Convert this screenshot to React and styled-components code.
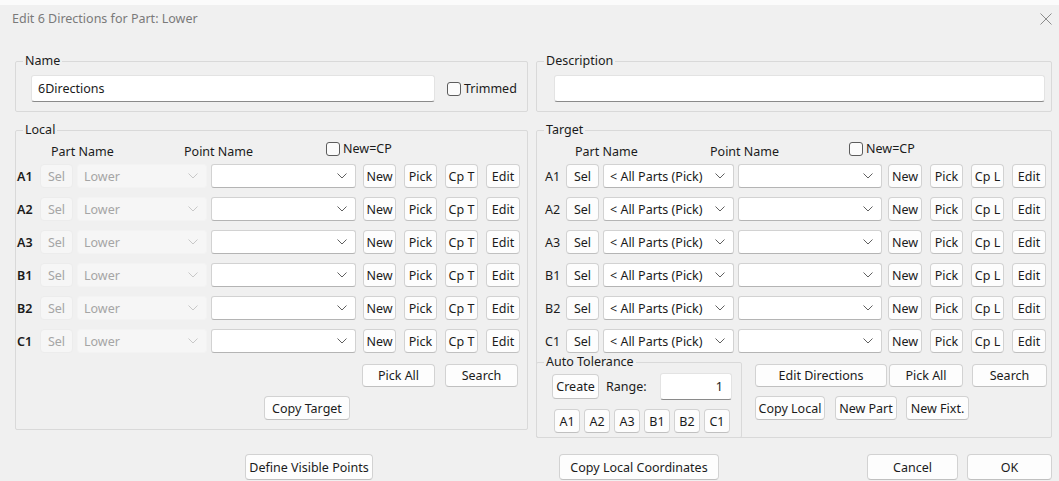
import React from "react";
import styled, { createGlobalStyle } from "styled-components";

const GlobalStyle = createGlobalStyle`
  * { box-sizing: border-box; }
  html, body { margin: 0; padding: 0; background: #f0f0f0; }
  body {
    font-family: "Noto Sans", "Open Sans", "Liberation Sans", sans-serif;
    font-size: 12.5px;
    color: #1b1b1b;
  }
`;

const Window = styled.div`
  width: 1059px;
  height: 481px;
  overflow: hidden;
  background: #f0f0f0;
  border-top: 5px solid #fbfbfb;
`;

const TitleBar = styled.div`
  height: 27px;
  display: flex;
  align-items: center;
  justify-content: space-between;
  padding: 0 7px 0 12px;
`;

const Title = styled.span`
  color: #7a7a7a;
  font-size: 12.5px;
`;

const Content = styled.div`
  padding: 21px 7px 0 15px;
`;

const Columns = styled.div`
  display: grid;
  grid-template-columns: 513px 516px;
  column-gap: 8px;
  align-items: start;
  margin-top: ${(p) => p.$mt || 0}px;
`;

const Group = styled.fieldset`
  margin: ${(p) => p.$margin || "0"};
  padding: 0;
  min-width: 0;
  width: ${(p) => (p.$w ? `${p.$w}px` : "auto")};
  border: 1px solid #d9d9d9;
  border-radius: 2px;
`;

const Legend = styled.legend`
  margin-left: 7px;
  padding: 0 2px;
  line-height: 16px;
  color: #1b1b1b;
`;

const FieldRow = styled.div`
  display: flex;
  align-items: center;
  gap: 12px;
  padding: 6px 0 9px ${(p) => p.$pl}px;
`;

const TextBox = styled.input`
  width: ${(p) => p.$w}px;
  height: 27px;
  padding: 0 ${(p) => (p.$right ? 8 : 6)}px;
  font: inherit;
  color: #1b1b1b;
  text-align: ${(p) => (p.$right ? "right" : "left")};
  background: #fff;
  border: 1px solid #e3e3e3;
  border-bottom: 1px solid #8a8a8a;
  border-radius: 3px;
  outline: none;
`;

const CheckLabel = styled.label`
  display: inline-flex;
  align-items: center;
  gap: 3px;
  height: 14px;
  line-height: 14px;
  align-self: ${(p) => (p.$center ? "center" : "flex-start")};
`;

const CheckBox = styled.span`
  display: inline-block;
  width: 14px;
  height: 14px;
  border: 1px solid #5c5c5c;
  border-radius: 3px;
  background: #fbfbfb;
`;

const HeaderRow = styled.div`
  display: flex;
  height: 20px;
  margin-top: 4px;
  padding-left: ${(p) => p.$pl}px;
  line-height: 20px;
`;

const HeaderText = styled.span`
  width: ${(p) => p.$w}px;
`;

const RowList = styled.div`
  display: flex;
  flex-direction: column;
  gap: 9px;
  margin-top: 2px;
`;

const PointRow = styled.div`
  display: flex;
  align-items: center;
  height: 24px;
`;

const RowLabel = styled.span`
  width: ${(p) => p.$w}px;
  padding-left: ${(p) => p.$pl}px;
  font-weight: ${(p) => (p.$bold ? 600 : 400)};
  color: #1b1b1b;
`;

const Fields = styled.div`
  display: flex;
  gap: 4px;
`;

const Buttons = styled.div`
  display: flex;
  gap: 8px;
  margin-left: ${(p) => p.$ml}px;
`;

const Btn = styled.button`
  width: ${(p) => p.$w}px;
  height: ${(p) => p.$h || 24}px;
  margin-left: ${(p) => p.$ml || 0}px;
  padding: 0;
  flex: none;
  font: inherit;
  color: #1b1b1b;
  background: #fdfdfd;
  border: 1px solid #d2d2d2;
  border-bottom-color: #c0c0c0;
  border-radius: 4px;
  white-space: nowrap;

  &:disabled {
    background: #f6f6f6;
    border-color: #ececec;
    color: #a5a5a5;
  }
`;

const Combo = styled.div`
  width: ${(p) => p.$w}px;
  height: 24px;
  display: flex;
  align-items: center;
  justify-content: space-between;
  padding: 0 8px 0 6px;
  color: ${(p) => (p.$disabled ? "#a5a5a5" : "#1b1b1b")};
  background: ${(p) => (p.$disabled ? "#f6f6f6" : "#fff")};
  border: 1px solid ${(p) => (p.$disabled ? "#f3f3f3" : "#d2d2d2")};
  border-bottom-color: ${(p) => (p.$disabled ? "#f3f3f3" : "#b4b4b4")};
  border-radius: 3px;
  white-space: nowrap;
`;

const ActionRow = styled.div`
  display: flex;
  justify-content: flex-end;
  gap: 10px;
  margin-top: 11px;
  padding-right: 9px;
`;

const CopyRow = styled.div`
  display: flex;
  margin-top: 9px;
  padding: 0 0 9px 248px;
`;

const BottomSection = styled.div`
  display: flex;
  margin-top: 1px;
`;

const ToleranceRow = styled.div`
  display: flex;
  align-items: center;
  height: 27px;
  margin-top: 3px;
  padding-left: 15px;
`;

const RangeLabel = styled.span`
  width: 54px;
  margin-left: 7px;
`;

const KeyRow = styled.div`
  display: flex;
  gap: 4px;
  margin-top: 9px;
  padding: 0 0 4px 17px;
`;

const Cluster = styled.div`
  display: flex;
  flex-direction: column;
  gap: 9px;
  padding: 10px 0 0 13px;
`;

const ClusterRow = styled.div`
  display: flex;
`;

const Footer = styled.div`
  display: flex;
  margin-top: 16px;
`;

const Chevron = ({ muted }) => (
  <svg width="10" height="6" viewBox="0 0 10 6">
    <polyline
      points="0.5,0.5 5,5 9.5,0.5"
      fill="none"
      stroke={muted ? "#c8c8c8" : "#606060"}
      strokeWidth="1"
    />
  </svg>
);

const CloseIcon = () => (
  <svg width="12" height="12" viewBox="0 0 12 12">
    <path d="M0.5 0.5 L11.5 11.5 M11.5 0.5 L0.5 11.5" stroke="#8c8c8c" strokeWidth="1" />
  </svg>
);

const rows = ["A1", "A2", "A3", "B1", "B2", "C1"];

function LocalGroup() {
  return (
    <Group>
      <Legend>Local</Legend>
      <HeaderRow $pl={35}>
        <HeaderText $w={133}>Part Name</HeaderText>
        <HeaderText $w={142}>Point Name</HeaderText>
        <CheckLabel>
          <CheckBox />
          New=CP
        </CheckLabel>
      </HeaderRow>
      <RowList>
        {rows.map((r) => (
          <PointRow key={r}>
            <RowLabel $w={24} $pl={1} $bold>
              {r}
            </RowLabel>
            <Fields>
              <Btn disabled $w={33}>
                Sel
              </Btn>
              <Combo $w={130} $disabled>
                Lower
                <Chevron muted />
              </Combo>
              <Combo $w={145}>
                <span />
                <Chevron />
              </Combo>
            </Fields>
            <Buttons $ml={7}>
              <Btn $w={33}>New</Btn>
              <Btn $w={33}>Pick</Btn>
              <Btn $w={33}>Cp T</Btn>
              <Btn $w={34}>Edit</Btn>
            </Buttons>
          </PointRow>
        ))}
      </RowList>
      <ActionRow>
        <Btn $w={73} $h={23}>
          Pick All
        </Btn>
        <Btn $w={73} $h={23}>
          Search
        </Btn>
      </ActionRow>
      <CopyRow>
        <Btn $w={86}>Copy Target</Btn>
      </CopyRow>
    </Group>
  );
}

function TargetGroup() {
  return (
    <Group>
      <Legend>Target</Legend>
      <HeaderRow $pl={38}>
        <HeaderText $w={135}>Part Name</HeaderText>
        <HeaderText $w={139}>Point Name</HeaderText>
        <CheckLabel>
          <CheckBox />
          New=CP
        </CheckLabel>
      </HeaderRow>
      <RowList>
        {rows.map((r) => (
          <PointRow key={r}>
            <RowLabel $w={29} $pl={8}>
              {r}
            </RowLabel>
            <Fields>
              <Btn $w={33}>Sel</Btn>
              <Combo $w={131}>
                {"< All Parts (Pick)"}
                <Chevron />
              </Combo>
              <Combo $w={144}>
                <span />
                <Chevron />
              </Combo>
            </Fields>
            <Buttons $ml={6}>
              <Btn $w={34}>New</Btn>
              <Btn $w={33}>Pick</Btn>
              <Btn $w={33}>Cp L</Btn>
              <Btn $w={34}>Edit</Btn>
            </Buttons>
          </PointRow>
        ))}
      </RowList>
      <BottomSection>
        <Group $w={206} $margin="0 0 -1px -1px">
          <Legend>Auto Tolerance</Legend>
          <ToleranceRow>
            <Btn $w={47} $h={25}>
              Create
            </Btn>
            <RangeLabel>Range:</RangeLabel>
            <TextBox $w={72} $right readOnly value="1" />
          </ToleranceRow>
          <KeyRow>
            {rows.map((r) => (
              <Btn key={r} $w={26}>
                {r}
              </Btn>
            ))}
          </KeyRow>
        </Group>
        <Cluster>
          <ClusterRow>
            <Btn $w={132} $h={23}>
              Edit Directions
            </Btn>
            <Btn $w={74} $h={23} $ml={2}>
              Pick All
            </Btn>
            <Btn $w={75} $h={23} $ml={9}>
              Search
            </Btn>
          </ClusterRow>
          <ClusterRow>
            <Btn $w={70}>Copy Local</Btn>
            <Btn $w={62} $ml={10}>
              New Part
            </Btn>
            <Btn $w={63} $ml={9}>
              New Fixt.
            </Btn>
          </ClusterRow>
        </Cluster>
      </BottomSection>
    </Group>
  );
}

export default function App() {
  return (
    <>
      <GlobalStyle />
      <Window>
        <TitleBar>
          <Title>Edit 6 Directions for Part: Lower</Title>
          <CloseIcon />
        </TitleBar>
        <Content>
          <Columns>
            <Group>
              <Legend>Name</Legend>
              <FieldRow $pl={15}>
                <TextBox $w={404} readOnly value="6Directions" />
                <CheckLabel $center>
                  <CheckBox />
                  Trimmed
                </CheckLabel>
              </FieldRow>
            </Group>
            <Group>
              <Legend>Description</Legend>
              <FieldRow $pl={17}>
                <TextBox $w={491} readOnly value="" />
              </FieldRow>
            </Group>
          </Columns>
          <Columns $mt={10}>
            <LocalGroup />
            <TargetGroup />
          </Columns>
          <Footer>
            <Btn $w={128} $h={26} $ml={230}>
              Define Visible Points
            </Btn>
            <Btn $w={160} $h={26} $ml={186}>
              Copy Local Coordinates
            </Btn>
            <Btn $w={91} $h={26} $ml={148}>
              Cancel
            </Btn>
            <Btn $w={85} $h={26} $ml={9}>
              OK
            </Btn>
          </Footer>
        </Content>
      </Window>
    </>
  );
}
